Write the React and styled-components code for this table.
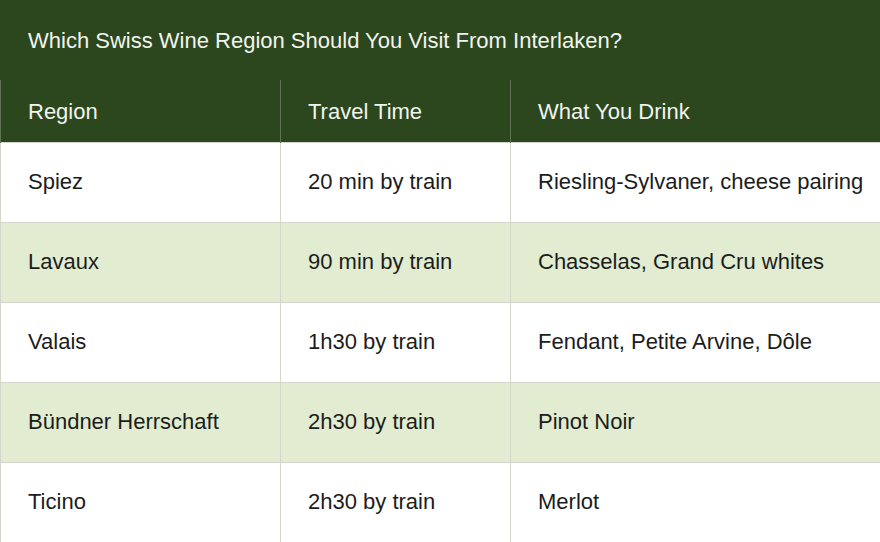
import React from "react";
import styled, { createGlobalStyle } from "styled-components";

const rows = [
  { region: "Spiez", time: "20 min by train", drink: "Riesling-Sylvaner, cheese pairing" },
  { region: "Lavaux", time: "90 min by train", drink: "Chasselas, Grand Cru whites" },
  { region: "Valais", time: "1h30 by train", drink: "Fendant, Petite Arvine, Dôle" },
  { region: "Bündner Herrschaft", time: "2h30 by train", drink: "Pinot Noir" },
  { region: "Ticino", time: "2h30 by train", drink: "Merlot" },
];

export default function App() {
  return (
    <>
      <GlobalStyle />
      <Wrapper>
        <Title>Which Swiss Wine Region Should You Visit From Interlaken?</Title>
        <Table>
          <colgroup>
            <col style={{ width: 280 }} />
            <col style={{ width: 230 }} />
            <col />
          </colgroup>
          <thead>
            <tr>
              <HeadCell>Region</HeadCell>
              <HeadCell>Travel Time</HeadCell>
              <HeadCell>What You Drink</HeadCell>
            </tr>
          </thead>
          <tbody>
            {rows.map((row, i) => (
              <Row key={row.region} $striped={i % 2 === 1}>
                <Cell>{row.region}</Cell>
                <Cell>{row.time}</Cell>
                <Cell>{row.drink}</Cell>
              </Row>
            ))}
          </tbody>
        </Table>
      </Wrapper>
    </>
  );
}

const GlobalStyle = createGlobalStyle`
  html, body {
    margin: 0;
    padding: 0;
    background: #ffffff;
    overflow: hidden;
  }
`;

const Wrapper = styled.div`
  width: 880px;
  height: 542px;
  overflow: hidden;
  font-family: "Liberation Sans", Arial, sans-serif;
`;

const Title = styled.div`
  height: 80px;
  display: flex;
  align-items: center;
  padding: 1px 0 0 28px;
  box-sizing: border-box;
  background-color: #2c471e;
  color: #f2f4ee;
  font-size: 22px;
  white-space: nowrap;
`;

const Table = styled.table`
  width: 960px;
  table-layout: fixed;
  border-collapse: collapse;
`;

const HeadCell = styled.th`
  height: 62px;
  box-sizing: border-box;
  padding: 2px 0 0 27px;
  text-align: left;
  font-weight: normal;
  font-size: 22px;
  color: #f2f4ee;
  background-color: #2c471e;
  border-left: 1px solid #5f7352;
  white-space: nowrap;
`;

const Row = styled.tr`
  background-color: ${(p) => (p.$striped ? "#e1ecd0" : "#ffffff")};
`;

const Cell = styled.td`
  height: 79px;
  padding: 0 0 0 27px;
  font-size: 22px;
  color: #1c1c1c;
  border: 1px solid #d2d6cc;
  white-space: nowrap;
`;
